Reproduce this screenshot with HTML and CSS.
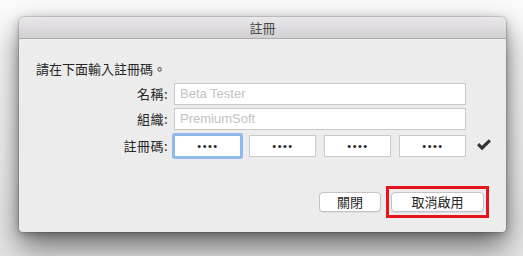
FILE: index.html
```html
<!DOCTYPE html>
<html>
<head>
<meta charset="utf-8">
<link rel="stylesheet" href="styles.css">
</head>
<body>
<div class="window">
  <div class="titlebar">註冊</div>
  <div class="content">
    <p class="intro">請在下面輸入註冊碼。</p>
    <div class="form">
      <label class="label">名稱:</label>
      <div class="field placeholder">Beta Tester</div>
      <span></span>
      <label class="label">組織:</label>
      <div class="field placeholder">PremiumSoft</div>
      <span></span>
      <label class="label code-label">註冊碼:</label>
      <div class="codes">
        <div class="field code focused">••••</div>
        <div class="field code">••••</div>
        <div class="field code">••••</div>
        <div class="field code">••••</div>
      </div>
      <svg class="check" width="16" height="12" viewBox="0 0 16 12"><path d="M1 6.2 L3.2 4 L6 6.8 L12.8 0.2 L15 2.4 L6 11.2 Z" fill="#333"/></svg>
    </div>
    <div class="buttons">
      <button class="btn close">關閉</button>
      <button class="btn deactivate">取消啟用</button>
    </div>
  </div>
</div>
</body>
</html>
```
FILE: styles.css
```css
html, body {
  margin: 0;
  padding: 0;
}
body {
  width: 523px;
  height: 256px;
  overflow: hidden;
  background: linear-gradient(#fbfbfb, #f0f0f0 60%, #e4e4e4);
  font-family: "Noto Sans CJK TC", "Liberation Sans", sans-serif;
  font-size: 13px;
  color: #262626;
}
.window {
  margin: 17px 0 0 19px;
  width: 487px;
  height: 215px;
  background: #ececec;
  border-radius: 5px 5px 4px 4px;
  box-shadow: 0 0 0 1px rgba(0,0,0,0.12), 0 14px 30px rgba(0,0,0,0.55), 0 2px 8px rgba(0,0,0,0.25);
  overflow: hidden;
  display: flex;
  flex-direction: column;
}
.titlebar {
  height: 21px;
  line-height: 21px;
  text-align: center;
  background: linear-gradient(#e9e7e9, #d2d0d2);
  border-bottom: 1px solid #acacac;
  color: #4a4a4a;
  font-size: 13px;
}
.content {
  padding: 21px 22px 0 17px;
  display: flex;
  flex-direction: column;
}
.intro {
  margin: 0;
  height: 18px;
  line-height: 18px;
}
.form {
  margin-top: 5px;
  display: grid;
  grid-template-columns: 132px 292px 16px;
  column-gap: 6px;
  row-gap: 3px;
  align-items: center;
}
.form .check {
  margin-left: 4px;
}
.label {
  text-align: right;
  line-height: 18px;
  letter-spacing: 0.5px;
}
.code-label {
  margin-top: 2px;
}
.field {
  box-sizing: border-box;
  height: 22px;
  line-height: 20px;
  border: 1px solid #c9c9c9;
  background: #fff;
  padding: 0 5px;
  font-family: "Liberation Sans", sans-serif;
  font-size: 13px;
}
.placeholder {
  color: #c2c2c2;
}
.codes {
  margin-top: 2px;
  display: flex;
  gap: 8px;
}
.code {
  width: 67px;
  text-align: center;
  color: #222;
  font-size: 11px;
  letter-spacing: 1.5px;
  padding: 0 0 0 1px;
}
.focused {
  border-color: #8db5e4;
  box-shadow: 0 0 0 2px #8fbaf0;
  border-radius: 1px;
}
.buttons {
  margin-top: 35px;
  display: flex;
  justify-content: flex-end;
  gap: 10px;
}
.btn {
  box-sizing: border-box;
  height: 20px;
  padding: 0;
  border: 1px solid #c3c3c3;
  border-radius: 4px;
  background: #fff;
  box-shadow: 0 1px 0 rgba(0,0,0,0.06);
  font-family: "Noto Sans CJK TC", sans-serif;
  font-size: 13px;
  line-height: 18px;
  color: #262626;
}
.close {
  width: 62px;
}
.deactivate {
  width: 93px;
  position: relative;
}
.deactivate::after {
  content: "";
  position: absolute;
  left: -6px;
  right: -6px;
  top: -7px;
  bottom: -7px;
  border: 3px solid #e8141c;
}
```
